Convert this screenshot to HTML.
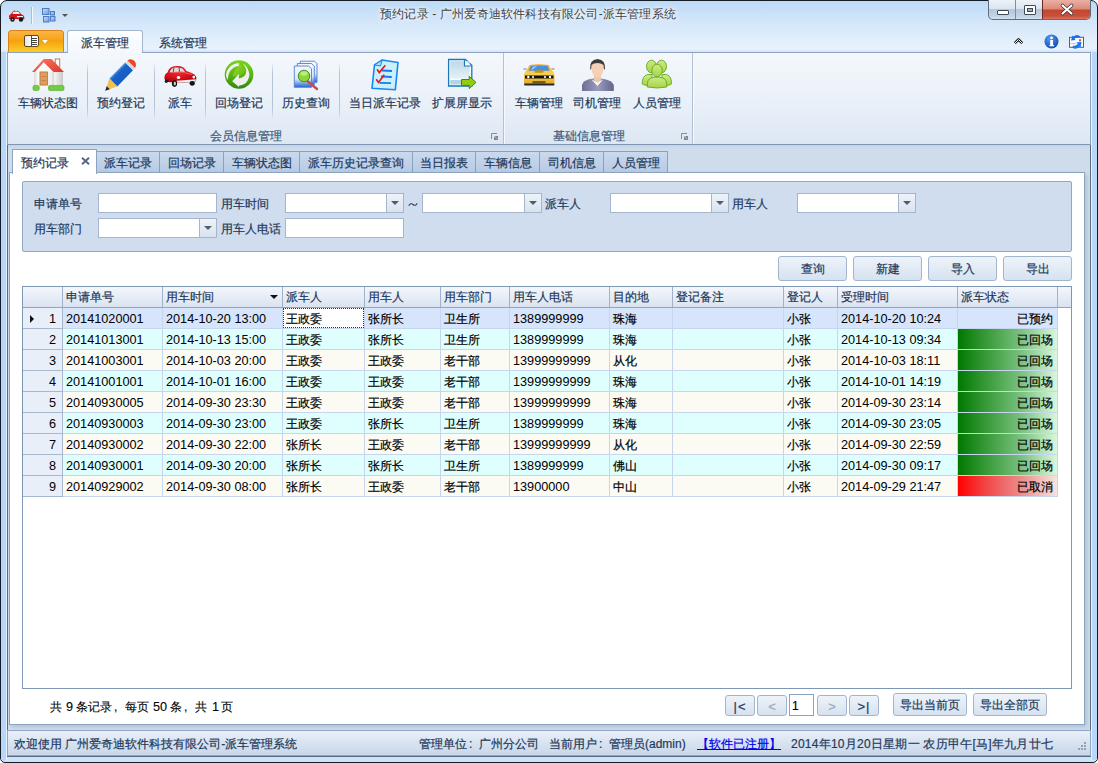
<!DOCTYPE html>
<html><head><meta charset="utf-8">
<style>
*{box-sizing:border-box;margin:0;padding:0}
html,body{width:1098px;height:763px;overflow:hidden;background:#fff}
body{font-family:"Liberation Sans",sans-serif;font-size:12px;color:#1e395b;position:relative;-webkit-text-stroke:0.2px currentColor}
.a{position:absolute}
.t{position:absolute;white-space:nowrap;line-height:14px}
svg{position:absolute;overflow:visible}
.sep{position:absolute;width:1px;top:62px;height:58px;background:linear-gradient(rgba(170,186,206,0),#b5c4d6 20%,#b5c4d6 80%,rgba(170,186,206,0))}
.rb{position:absolute;top:96px;line-height:14px;white-space:nowrap;color:#1e395b}
.dt{position:absolute;top:151px;height:22px;border:1px solid #8aa2c2;border-bottom:none;background:linear-gradient(#cad9ee,#b6cae3);color:#1e395b;line-height:22px;text-align:center}
.lb{position:absolute;line-height:14px;white-space:nowrap;color:#1e395b}
.in{position:absolute;height:20px;background:#fff;border:1px solid #a4b5cc}
.dd{position:absolute;top:0;right:0;width:17px;height:18px;border-left:1px solid #a4b5cc;background:linear-gradient(#eef3f9,#d9e3ef)}
.dd:after{content:"";position:absolute;left:4px;top:7px;border-left:4px solid transparent;border-right:4px solid transparent;border-top:4px solid #4d5d72}
.btn{position:absolute;border:1px solid #a3b5cd;border-radius:3px;background:linear-gradient(#eef3f9,#d6e2f0);color:#1e395b;text-align:center;line-height:24px}
.gh{position:absolute;top:290px;line-height:14px;white-space:nowrap;color:#1e395b}
.gc{position:absolute;line-height:14px;white-space:nowrap;color:#000;font-size:12.7px;margin-top:1px;-webkit-text-stroke:0}
.gz{font-size:12px;margin-top:1px;-webkit-text-stroke:0.2px currentColor}
.rn{position:absolute;left:23px;width:33px;text-align:right;line-height:14px;color:#000;font-size:12.7px;margin-top:1px;-webkit-text-stroke:0}
</style></head><body>
<!-- window frame -->
<div class="a" style="left:0;top:0;width:1098px;height:763px;background:linear-gradient(#bcdaf6 0px,#d1e5f9 18px,#e8f2fc 48px,#c9def5 52px,#cfe3f8 100%);border:1px solid #141c26;border-radius:7px 7px 5px 5px"></div>
<div class="a" style="left:1px;top:52px;width:6px;height:708px;background:linear-gradient(90deg,#b8d6f8 0,#b8d6f8 5px,#e6f2fe 5px)"></div>
<div class="a" style="left:1091px;top:52px;width:6px;height:708px;background:linear-gradient(90deg,#e6f2fe 0,#e6f2fe 1px,#b8d6f8 1px)"></div>

<!-- quick access toolbar -->
<svg style="left:8px;top:10px" width="17" height="12" viewBox="0 0 17 12">
 <path d="M1 6.5 Q1 4.5 3 4 L5 1.5 Q8 .5 11 1.5 L13 4 Q16 4.8 16.3 7 V9 H1.2 Z" fill="#d4121c"/>
 <path d="M5.3 2 Q8 1.2 10.7 2 L11.8 4 H4.5 Z" fill="#eef2f2"/>
 <rect x="5.5" y=".6" width="1.6" height="1.2" fill="#f33"/><rect x="8.8" y=".6" width="1.6" height="1.2" fill="#3b3"/>
 <rect x="9" y="6" width="6" height="1.3" fill="#f4f4f4"/>
 <ellipse cx="4.5" cy="9.5" rx="2.2" ry="2.2" fill="#151515"/><ellipse cx="13" cy="9.5" rx="2.2" ry="2.2" fill="#151515"/>
 <circle cx="4.5" cy="9.5" r=".8" fill="#bbb"/>
</svg>
<div class="a" style="left:31px;top:7px;width:1px;height:17px;background:#a9bdd4;box-shadow:1px 0 0 #f4f9ff"></div>
<svg style="left:42px;top:8px" width="14" height="15" viewBox="0 0 14 15">
 <defs><linearGradient id="qg" x1="0" y1="0" x2="1" y2="1"><stop offset="0" stop-color="#c9dcf4"/><stop offset="1" stop-color="#6f9ad6"/></linearGradient></defs>
 <rect x=".5" y=".5" width="6.5" height="6" fill="url(#qg)" stroke="#4d7cc4"/>
 <rect x="8.5" y="3.5" width="4" height="3.5" fill="url(#qg)" stroke="#4d7cc4"/>
 <rect x="1.5" y="8.5" width="5.5" height="5.5" fill="url(#qg)" stroke="#4d7cc4"/>
 <rect x="8.5" y="8.5" width="4.5" height="4.5" fill="url(#qg)" stroke="#4d7cc4"/>
</svg>
<div class="a" style="left:62px;top:14px;border-left:3px solid transparent;border-right:3px solid transparent;border-top:3px solid #555"></div>

<!-- title -->
<div class="t" style="left:380px;top:7px;color:#404040;-webkit-text-stroke:0;letter-spacing:0.2px;text-shadow:0 0 6px #fff,0 0 3px #fff">预约记录 - 广州爱奇迪软件科技有限公司-派车管理系统</div>

<!-- window buttons -->
<div class="a" style="left:988px;top:0;width:103px;height:20px;border:1px solid #5f6d7e;border-top:none;border-radius:0 0 5px 5px;overflow:hidden;background:linear-gradient(#edf3f9,#dbe5f0 45%,#b7c8dc 50%,#c3d3e6 85%,#d5e2ef)">
 <div class="a" style="left:26px;top:0;width:1px;height:20px;background:#7d8da0"></div>
 <div class="a" style="left:53px;top:0;width:49px;height:20px;border-left:1px solid #6a2a24;background:linear-gradient(#eab0a4,#dc8a78 45%,#c5452e 50%,#c9503a 80%,#d8806a)"></div>
 <div class="a" style="left:8px;top:10px;width:12px;height:5px;background:#fff;border:1px solid #3e4a58;border-radius:1px"></div>
 <div class="a" style="left:35px;top:5px;width:12px;height:10px;background:#fff;border:1px solid #3e4a58;border-radius:1px"></div>
 <div class="a" style="left:38px;top:8px;width:6px;height:4px;background:#9fb0c4;border:1px solid #3e4a58"></div>
 <svg style="left:72px;top:4px" width="12" height="11" viewBox="0 0 12 11"><path d="M1.5 1.5 L10.5 9.5 M10.5 1.5 L1.5 9.5" stroke="#3a2a2a" stroke-width="3.6" stroke-linecap="round"/><path d="M1.5 1.5 L10.5 9.5 M10.5 1.5 L1.5 9.5" stroke="#fff" stroke-width="2.2" stroke-linecap="round"/></svg>
</div>
<div class="a" style="left:1090px;top:52px;width:1px;height:705px;background:#5a6b80"></div>
<div class="a" style="left:7px;top:52px;width:1px;height:705px;background:#5a6b80"></div>
<div class="a" style="left:7px;top:756px;width:1084px;height:1px;background:#5a6b80"></div>

<!-- ribbon tabs -->
<div class="a" style="left:8px;top:30px;width:56px;height:23px;border:1px solid #d9801a;border-bottom:none;border-radius:4px 4px 0 0;background:linear-gradient(#fbb546,#f6a10e 45%,#f9b81a 70%,#fdd030)"></div>
<div class="a" style="left:24px;top:35px;width:15px;height:12px;border:1px solid #5d4a20;border-radius:2px;background:linear-gradient(90deg,#e6e6e6 0,#fafafa 6px,#5d4a20 6px,#5d4a20 7px,#fff 7px)"></div>
<div class="a" style="left:32px;top:38px;width:5px;height:1px;background:#444;box-shadow:0 2px 0 #444,0 4px 0 #444,0 6px 0 #444"></div>
<div class="a" style="left:42px;top:40px;border-left:3.5px solid transparent;border-right:3.5px solid transparent;border-top:4px solid #fff;filter:drop-shadow(0 0 .6px #6a4a10)"></div>

<div class="a" style="left:67px;top:30px;width:76px;height:23px;border:1px solid #a3b6cf;border-bottom:none;border-radius:3px 3px 0 0;background:linear-gradient(#fdfeff,#f3f7fc)"></div>
<div class="t" style="left:81px;top:36px;color:#1e395b">派车管理</div>
<div class="t" style="left:159px;top:36px;color:#1e395b">系统管理</div>

<!-- right ribbon icons -->
<svg style="left:1013px;top:37px" width="11" height="8" viewBox="0 0 11 8"><path d="M1.8 6.2 L5.5 2.5 L9.2 6.2" fill="none" stroke="#1a1a1a" stroke-width="2.6" stroke-linejoin="round"/><path d="M1.8 6.2 L5.5 2.5 L9.2 6.2" fill="none" stroke="#fff" stroke-width="1" stroke-linejoin="round"/></svg>
<svg style="left:1044px;top:34px" width="15" height="15" viewBox="0 0 15 15"><defs><radialGradient id="ig" cx=".4" cy=".3" r=".8"><stop offset="0" stop-color="#4f9ef5"/><stop offset="1" stop-color="#0b44a8"/></radialGradient></defs><circle cx="7.5" cy="7.5" r="7" fill="url(#ig)"/><rect x="6.2" y="6" width="2.8" height="6" fill="#fff"/><rect x="5.5" y="11" width="4.5" height="1.3" fill="#fff"/><circle cx="7.6" cy="3.8" r="1.4" fill="#fff"/></svg>
<svg style="left:1064px;top:30px" width="24" height="24" viewBox="0 0 24 24">
 <rect x="5.5" y="7.3" width="14" height="10" fill="#fafafa" stroke="#5a5a7a" stroke-width="1"/>
 <rect x="15" y="9.3" width="2" height="2" fill="#c05a20"/>
 <path d="M6.5 13.5 H12" stroke="#b8b8b8" stroke-width=".8"/>
 <path d="M16.5 6.5 Q13 3.5 9.5 6.5 L8.5 5.5 L7 10.5 L11.5 10 L10.5 8.5 Q13 6.5 15 7.5 Z" fill="#1a6af0"/>
 <path d="M8 17.5 Q12 20.5 15.5 16.5 L16.5 17.5 L17.5 12 L12.5 12.3 L13.8 13.8 Q11.5 16.5 9.5 15.5 Z" fill="#1a78f0"/>
</svg>

<!-- ribbon body -->
<div class="a" style="left:7px;top:52px;width:1084px;height:93px;border:1px solid #8ea3bf;border-bottom-color:#7f95b3;background:linear-gradient(#f4f8fd,#e9f0f8 55%,#dde7f3)"></div>
<div class="a" style="left:68px;top:52px;width:74px;height:1px;background:#f4f8fd"></div>
<!-- group separators -->
<div class="a" style="left:503px;top:53px;width:1px;height:91px;background:#b2c2d6;box-shadow:1px 0 0 #f6f9fd"></div>
<div class="a" style="left:692px;top:53px;width:1px;height:91px;background:#b2c2d6;box-shadow:1px 0 0 #f6f9fd"></div>
<div class="sep" style="left:87px"></div>
<div class="sep" style="left:154px"></div>
<div class="sep" style="left:205px"></div>
<div class="sep" style="left:272px"></div>
<div class="sep" style="left:339px"></div>

<div class="rb" style="left:18px">车辆状态图</div>
<div class="rb" style="left:97px">预约登记</div>
<div class="rb" style="left:168px">派车</div>
<div class="rb" style="left:215px">回场登记</div>
<div class="rb" style="left:282px">历史查询</div>
<div class="rb" style="left:349px">当日派车记录</div>
<div class="rb" style="left:432px">扩展屏显示</div>
<div class="rb" style="left:515px">车辆管理</div>
<div class="rb" style="left:573px">司机管理</div>
<div class="rb" style="left:633px">人员管理</div>
<div class="rb" style="left:210px;top:129px;color:#3e5a7d">会员信息管理</div>
<div class="rb" style="left:553px;top:129px;color:#3e5a7d">基础信息管理</div>
<svg style="left:491px;top:133px" width="8" height="8" viewBox="0 0 8 8"><path d="M.5 6 V.5 H6" fill="none" stroke="#858d98" stroke-width="1"/><path d="M3 3 L7 7 H3 Z M4 3 H7 V7 Z" fill="#7f8790"/></svg>
<svg style="left:681px;top:133px" width="8" height="8" viewBox="0 0 8 8"><path d="M.5 6 V.5 H6" fill="none" stroke="#858d98" stroke-width="1"/><path d="M3 3 L7 7 H3 Z M4 3 H7 V7 Z" fill="#7f8790"/></svg>

<!-- house -->
<svg style="left:28px;top:55px" width="40" height="40" viewBox="0 0 40 40">
 <defs>
  <linearGradient id="hw" x1="0" x2="1"><stop offset="0" stop-color="#d9d9d9"/><stop offset=".15" stop-color="#fbfbfb"/><stop offset=".62" stop-color="#f0f0f0"/><stop offset=".66" stop-color="#cfcfcf"/><stop offset=".7" stop-color="#f4f4f4"/><stop offset="1" stop-color="#c9c9c9"/></linearGradient>
  <linearGradient id="hr" x1="0" y1="0" x2="1" y2="1"><stop offset="0" stop-color="#ff7a66"/><stop offset="1" stop-color="#d93a2a"/></linearGradient>
 </defs>
 <rect x="6" y="16" width="29" height="19.5" fill="url(#hw)"/>
 <path d="M7 17 L15.7 7.5 L25.5 17 Z" fill="#f9f9f9"/>
 <rect x="27.3" y="4" width="4.4" height="8" fill="#fff" stroke="#d07a3a" stroke-width="1"/>
 <path d="M4 17 L15.7 3.9 L23.5 3.9 L36 17 L25.5 17 L15.7 7.3 L7 17 Z" fill="url(#hr)"/>
 <rect x="12" y="17" width="7.4" height="13" fill="#dba060" stroke="#c27a36" stroke-width="1"/>
 <path d="M13.5 21.5 H18 M13.5 25.5 H18" stroke="#c27a36" stroke-width=".8"/>
 <rect x="11" y="31" width="9.5" height="4" fill="#f6f6f6"/>
 <rect x="5" y="30.4" width="6.2" height="5.2" rx="1.5" fill="#72cc40" stroke="#52a828" stroke-width=".6"/>
 <rect x="20.5" y="30.4" width="15.5" height="5.2" rx="1.5" fill="#72cc40" stroke="#52a828" stroke-width=".6"/>
</svg>
<!-- pencil -->
<svg style="left:100px;top:55px" width="40" height="40" viewBox="0 0 40 40">
 <defs><linearGradient id="pb" x1="0" y1="0" x2="1" y2="1"><stop offset="0" stop-color="#2a78dc"/><stop offset=".3" stop-color="#5aa6f0"/><stop offset=".42" stop-color="#1a60c8"/><stop offset=".7" stop-color="#1a5cc0"/><stop offset="1" stop-color="#083c98"/></linearGradient></defs>
 <path d="M9.4 23.6 L25.2 7.6 L33 15.2 L17.3 31.5 Z" fill="url(#pb)"/>
 <path d="M25.2 7.6 L27.5 5.5 L35.2 13 L33 15.2 Z" fill="#d8d8d8"/>
 <path d="M27.5 5.5 Q31 3 34.5 6 Q37 9 35.2 13 Z" fill="#ee4422"/>
 <path d="M9.4 23.6 L17.3 31.5 L5.2 35.8 Z" fill="#f0c050"/>
 <path d="M5.2 35.8 L6.7 31.2 L9.8 34.3 Z" fill="#1a2a40"/>
</svg>
<!-- beetle car -->
<svg style="left:160px;top:55px" width="40" height="40" viewBox="0 0 40 40">
 <defs><radialGradient id="cr" cx=".45" cy=".35" r=".7"><stop offset="0" stop-color="#f0303a"/><stop offset=".7" stop-color="#cc0a14"/><stop offset="1" stop-color="#8a0008"/></radialGradient></defs>
 <path d="M4.5 24 Q4 19 7.5 17.5 Q9 12 14 11.3 Q20 10.5 23.5 12.5 Q25.5 14 26.5 16 Q31.5 17.5 34.5 19.5 Q36.5 21 36.2 24.5 L35.8 26.5 Q30 27.5 20 27.5 Q10 27.5 6 26.5 Z" fill="url(#cr)"/>
 <path d="M9.5 17.5 Q11 13 14.5 12.5 Q19.5 12 22.5 13.5 L25 17 Q17 16.5 9.5 17.5 Z" fill="#d9dfe3"/>
 <path d="M14 12.8 L13.2 17.2 M19 12.3 L19.5 16.8" stroke="#7a2020" stroke-width=".9"/>
 <path d="M12 17.5 Q22 15.5 32 19.5" stroke="#ff6a6a" stroke-width=".8" fill="none"/>
 <path d="M16.5 25.7 Q26 25 35.8 24.3 L35.6 26.5 Q26 27.3 16.5 27.5 Z" fill="#eeeeee"/>
 <ellipse cx="18.5" cy="22.5" rx="1.8" ry="1.6" fill="#eef4f6"/>
 <ellipse cx="33.8" cy="22" rx="1.4" ry="1.5" fill="#eef4f6"/>
 <ellipse cx="14.5" cy="28.6" rx="2.6" ry="3.3" fill="#141414"/>
 <ellipse cx="14.8" cy="28.6" rx="1.1" ry="2" fill="#d0d0d0"/>
 <ellipse cx="32.2" cy="28.3" rx="2.6" ry="2.4" fill="#141414"/>
 <ellipse cx="6.3" cy="26.3" rx="1.6" ry="1.6" fill="#1a1a1a"/>
</svg>
<!-- recycle -->
<svg style="left:219px;top:55px" width="40" height="40" viewBox="0 0 40 40">
 <defs><linearGradient id="rg" x1="0" y1="0" x2="0" y2="1"><stop offset="0" stop-color="#7cd41c"/><stop offset=".5" stop-color="#5cb414"/><stop offset="1" stop-color="#2e8a0c"/></linearGradient>
 <linearGradient id="rh" x1="0" y1="0" x2="1" y2="1"><stop offset="0" stop-color="#9ee21e"/><stop offset="1" stop-color="#5cb414"/></linearGradient></defs>
 <circle cx="20.05" cy="19.5" r="14.3" fill="url(#rg)"/>
 <path d="M8.3 25.3 Q6.5 21 7.2 18.6 Q8 15 9.7 13.2 Q12 10.2 14.6 9.2 Q17 8 19.9 7.9 L19.9 11 Q17 11.3 15 12.4 Q12.5 14 10.8 16.4 Q9.5 19 9.2 21.7 Z" fill="#f0f0f0"/>
 <path d="M19.9 8.3 L27.3 15.5 L19.9 21.7 Q16 20 13.5 22 Q15 14 19.9 12 Z" fill="url(#rh)"/>
 <path d="M23.9 8.8 Q28 11 29.7 16.4 Q31 19.5 30.2 21.7 Q29 25.5 27 28 Q24 30 19.9 30.8 L19.9 32 L13.2 26.2 L19.9 19 L19.9 23.5 Q21.5 23.3 23 22.6 Q25 21.5 26.2 19.9 Q27.3 17.5 27.3 15.5 Q26.5 11.5 23.9 8.8 Z" fill="#efefef"/>
</svg>
<!-- history docs -->
<svg style="left:286px;top:55px" width="40" height="40" viewBox="0 0 40 40">
 <defs><linearGradient id="dg" x1="0" y1="0" x2="0" y2="1"><stop offset="0" stop-color="#f4f8fc"/><stop offset=".6" stop-color="#dfeaf6"/><stop offset="1" stop-color="#1e66d0"/></linearGradient></defs>
 <path d="M14.3 6.2 H28.5 L31 8.7 V27.3 H14.3 Z" fill="url(#dg)" stroke="#4f7fd6" stroke-width=".9"/>
 <path d="M11.3 8.5 H25.5 L28.3 11.2 V29.8 H11.3 Z" fill="url(#dg)" stroke="#4f7fd6" stroke-width=".9"/>
 <path d="M8.3 11 H22.5 L25.5 13.8 V32.3 H8.3 Z" fill="url(#dg)" stroke="#4f7fd6" stroke-width=".9"/>
 <path d="M21.8 26.5 L31 34" stroke="#c84858" stroke-width="2.4" stroke-linecap="round"/>
 <circle cx="18" cy="21" r="5.8" fill="#8ad838" stroke="#3c8a18" stroke-width=".9"/>
 <ellipse cx="18" cy="18.5" rx="3.5" ry="2.3" fill="#b8ee7a"/>
</svg>
<!-- checklist -->
<svg style="left:365px;top:55px" width="40" height="40" viewBox="0 0 40 40">
 <path d="M9.5 10 L17.2 5 L33 7.5 L30.3 34.8 L7 33.3 Z" fill="#c9f0fc" stroke="#1a86f0" stroke-width="1.6" stroke-linejoin="round"/>
 <path d="M9.5 10 L17.2 5 L15.5 11 Z" fill="#a8dcf4" stroke="#1a86f0" stroke-width="1"/>
 <path d="M17 15.5 L27 16 M16 21.5 L26.8 22 M14.5 27.8 L26 28.2" stroke="#1a7ce8" stroke-width="1.8"/>
 <path d="M12 14.3 L14.3 17.6 L20.3 10.2" fill="none" stroke="#ee1111" stroke-width="1.6"/>
 <path d="M11.2 24.3 L13.5 27.4 L19.3 19.8" fill="none" stroke="#ee1111" stroke-width="1.6"/>
</svg>
<!-- export doc -->
<svg style="left:442px;top:55px" width="40" height="40" viewBox="0 0 40 40">
 <defs><linearGradient id="eg" x1="0" y1="0" x2="0" y2="1"><stop offset="0" stop-color="#bcdae8"/><stop offset="1" stop-color="#e6f1f7"/></linearGradient></defs>
 <path d="M6.6 4.5 H23.4 L29.8 10.3 V31 H6.6 Z" fill="#fff" stroke="#1a78b8" stroke-width="1.3"/>
 <rect x="8.2" y="6.2" width="19.5" height="17.5" fill="url(#eg)"/>
 <rect x="8.2" y="25" width="11" height="4.5" fill="#b3d6e6"/>
 <path d="M22.5 5 V11 H29.3" fill="#fff" stroke="#1a78b8" stroke-width="1.2"/>
 <path d="M19.5 24.5 H27.2 V21.3 L34 27.4 L27.2 33.6 V30.4 H19.5 Z" fill="#94cc10" stroke="#3a8a10" stroke-width="1"/>
</svg>
<!-- taxi -->
<svg style="left:519px;top:55px" width="40" height="40" viewBox="0 0 40 40">
 <defs><linearGradient id="tg" x1="0" y1="0" x2="0" y2="1"><stop offset="0" stop-color="#f0a528"/><stop offset=".45" stop-color="#f6d050"/><stop offset="1" stop-color="#e8a828"/></linearGradient></defs>
 <path d="M10.5 10 Q20 8.5 29.5 10 L33 15.5 Q35.5 17 35.5 21 V29 H5 V21 Q5 17 7.5 15.5 Z" fill="url(#tg)"/>
 <path d="M12 11 Q20 9.8 28.5 11 L30.5 15.8 H9.5 Z" fill="#4a8ee0"/>
 <path d="M14 12 L18 11 L12 15.5 Z" fill="#bfe0fa"/>
 <rect x="15.5" y="15.5" width="9" height="2.2" rx="1" fill="#c89010"/>
 <rect x="6" y="20.5" width="28.5" height="3" fill="#111"/>
 <circle cx="9.3" cy="22" r="1.2" fill="#fff"/><circle cx="14" cy="22" r="1.1" fill="#fff"/><circle cx="26" cy="22" r="1.1" fill="#fff"/><circle cx="31" cy="22" r="1.2" fill="#fff"/>
 <rect x="13.5" y="26" width="13" height="2.5" fill="#6a6020"/>
 <rect x="5" y="28.5" width="30.5" height="2" rx="1" fill="#2a2a2a"/>
 <rect x="4.5" y="13" width="3" height="2" fill="#b8b8b8"/><rect x="32.5" y="13" width="3" height="2" fill="#b8b8b8"/>
</svg>
<!-- driver -->
<svg style="left:577px;top:55px" width="40" height="40" viewBox="0 0 40 40">
 <defs><linearGradient id="bg2" x1="0" x2="1"><stop offset="0" stop-color="#6c6e94"/><stop offset=".5" stop-color="#9a9cbc"/><stop offset="1" stop-color="#62648a"/></linearGradient></defs>
 <path d="M5 36 V30 Q6 25.5 13 24 L20 23 L27 24 Q35 25.5 36.8 30 V36 Z" fill="url(#bg2)"/>
 <path d="M14.5 24.5 L20.5 31 L26 24.5 L20.5 27 Z" fill="#fafafa"/>
 <path d="M17 21 H24 V24.5 L20.5 28 L17 24.5 Z" fill="#f0c6a6"/>
 <path d="M14.3 9 Q14 22 20.5 22.5 Q27 22 26.7 9 Z" fill="#f6d0b4"/>
 <path d="M13.2 15 Q12 4.5 20.5 4 Q29 4.5 28 15 L26.8 13.5 L26.5 10 Q24 7.8 20.5 8.3 Q16.5 7.8 14.5 10 L14.3 13.5 Z" fill="#3e3a36"/>
</svg>
<!-- people -->
<svg style="left:637px;top:55px" width="40" height="40" viewBox="0 0 40 40">
 <defs><linearGradient id="gg" x1="0" y1="0" x2="0" y2="1"><stop offset="0" stop-color="#cdeb86"/><stop offset="1" stop-color="#a6d444"/></linearGradient></defs>
 <g fill="url(#gg)" stroke="#66a81c" stroke-width=".9">
  <ellipse cx="14.5" cy="11.5" rx="5" ry="6.3"/>
  <ellipse cx="24.5" cy="11.5" rx="5" ry="6.3"/>
  <path d="M5.2 29 Q5 21 10.5 19.5 L15 19.5 V30.5 Q7 30.5 5.2 29 Z"/>
  <path d="M34.5 29 Q34.8 21 29.5 19.5 L25 19.5 V30.5 Q33 30.5 34.5 29 Z"/>
  <path d="M10.3 32 Q10 24 14 23 Q17 22 20 22 Q23 22 26 23 Q30 24 29.8 32 Q20 34 10.3 32 Z"/>
  <ellipse cx="20" cy="15.5" rx="5.2" ry="6.3"/>
 </g>
</svg>


<!-- area below ribbon -->
<div class="a" style="left:8px;top:145px;width:1082px;height:586px;background:linear-gradient(#c5d4e6,#cfdcec 4px,#cfdcec)"></div>

<!-- doc tabs -->
<div class="dt" style="left:96px;width:64px">派车记录</div>
<div class="dt" style="left:159px;width:65px">回场记录</div>
<div class="dt" style="left:223px;width:77px">车辆状态图</div>
<div class="dt" style="left:299px;width:114px">派车历史记录查询</div>
<div class="dt" style="left:412px;width:64px">当日报表</div>
<div class="dt" style="left:475px;width:65px">车辆信息</div>
<div class="dt" style="left:539px;width:65px">司机信息</div>
<div class="dt" style="left:603px;width:65px">人员管理</div>

<!-- content panel -->
<div class="a" style="left:9px;top:172px;width:1076px;height:553px;background:#fff;border:1px solid #8ca3c1;box-shadow:2px 2px 4px rgba(70,100,140,.22)"></div>
<!-- active tab -->
<div class="a" style="left:12px;top:149px;width:85px;height:25px;background:#fff;border:1px solid #8ca3c1;border-bottom:none"></div>
<div class="t" style="left:21px;top:156px;color:#1e395b">预约记录</div>
<svg style="left:81px;top:157px" width="9" height="8" viewBox="0 0 9 8"><path d="M1 .8 L8 7.2 M8 .8 L1 7.2" stroke="#56678a" stroke-width="2"/></svg>


<!-- filter panel -->
<div class="a" style="left:22px;top:181px;width:1050px;height:71px;background:#d0ddee;border:1px solid #92a7c3;border-radius:2px"></div>
<div class="lb" style="left:34px;top:197px">申请单号</div>
<div class="in" style="left:98px;top:193px;width:119px"></div>
<div class="lb" style="left:221px;top:197px">用车时间</div>
<div class="in" style="left:285px;top:193px;width:119px"><div class="dd"></div></div>
<svg style="left:408px;top:201px" width="10" height="7" viewBox="0 0 10 7"><path d="M.8 4.8 Q2.5 1.5 5 3.5 Q7.5 5.5 9.2 2.2" fill="none" stroke="#2a3f5c" stroke-width="1.1"/></svg>
<div class="in" style="left:422px;top:193px;width:120px"><div class="dd"></div></div>
<div class="lb" style="left:545px;top:197px">派车人</div>
<div class="in" style="left:610px;top:193px;width:119px"><div class="dd"></div></div>
<div class="lb" style="left:732px;top:197px">用车人</div>
<div class="in" style="left:797px;top:193px;width:119px"><div class="dd"></div></div>
<div class="lb" style="left:34px;top:222px">用车部门</div>
<div class="in" style="left:98px;top:218px;width:119px"><div class="dd"></div></div>
<div class="lb" style="left:221px;top:222px">用车人电话</div>
<div class="in" style="left:285px;top:218px;width:119px"></div>

<!-- action buttons -->
<div class="btn" style="left:778px;top:256px;width:69px;height:25px">查询</div>
<div class="btn" style="left:853px;top:256px;width:69px;height:25px">新建</div>
<div class="btn" style="left:928px;top:256px;width:69px;height:25px">导入</div>
<div class="btn" style="left:1003px;top:256px;width:69px;height:25px">导出</div>


<!-- grid start -->
<div class="a" style="left:22px;top:286px;width:1050px;height:403px;background:#fff;border:1px solid #7f97b6"></div>
<div class="a" style="left:23px;top:287px;width:1048px;height:20px;background:linear-gradient(#f4f7fc,#e4ebf5 60%,#dae3ef)"></div>
<div class="a" style="left:23px;top:307px;width:1048px;height:1px;background:#8da4c3"></div>
<div class="a" style="left:62px;top:287px;width:1px;height:20px;background:#9fb2cc"></div>
<div class="a" style="left:162px;top:287px;width:1px;height:20px;background:#9fb2cc"></div>
<div class="a" style="left:282px;top:287px;width:1px;height:20px;background:#9fb2cc"></div>
<div class="a" style="left:364px;top:287px;width:1px;height:20px;background:#9fb2cc"></div>
<div class="a" style="left:440px;top:287px;width:1px;height:20px;background:#9fb2cc"></div>
<div class="a" style="left:509px;top:287px;width:1px;height:20px;background:#9fb2cc"></div>
<div class="a" style="left:609px;top:287px;width:1px;height:20px;background:#9fb2cc"></div>
<div class="a" style="left:672px;top:287px;width:1px;height:20px;background:#9fb2cc"></div>
<div class="a" style="left:783px;top:287px;width:1px;height:20px;background:#9fb2cc"></div>
<div class="a" style="left:837px;top:287px;width:1px;height:20px;background:#9fb2cc"></div>
<div class="a" style="left:957px;top:287px;width:1px;height:20px;background:#9fb2cc"></div>
<div class="a" style="left:1057px;top:287px;width:1px;height:20px;background:#9fb2cc"></div>
<div class="gh" style="left:66px">申请单号</div>
<div class="gh" style="left:166px">用车时间</div>
<div class="gh" style="left:286px">派车人</div>
<div class="gh" style="left:368px">用车人</div>
<div class="gh" style="left:444px">用车部门</div>
<div class="gh" style="left:513px">用车人电话</div>
<div class="gh" style="left:613px">目的地</div>
<div class="gh" style="left:676px">登记备注</div>
<div class="gh" style="left:787px">登记人</div>
<div class="gh" style="left:841px">受理时间</div>
<div class="gh" style="left:961px">派车状态</div>
<div class="a" style="left:270px;top:295px;border-left:4px solid transparent;border-right:4px solid transparent;border-top:4px solid #111"></div>
<div class="a" style="left:23px;top:308px;width:39px;height:20px;background:#e9eff8"></div>
<div class="a" style="left:23px;top:328px;width:39px;height:1px;background:#a6b8d0"></div>
<div class="rn" style="top:311px">1</div>
<div class="a" style="left:63px;top:308px;width:994px;height:20px;background:#d6e5fb"></div>
<div class="a" style="left:63px;top:328px;width:994px;height:1px;background:#c5d6ee"></div>
<div class="gc" style="left:66px;top:311px">20141020001</div>
<div class="gc" style="left:166px;top:311px">2014-10-20 13:00</div>
<div class="gc gz" style="left:286px;top:311px">王政委</div>
<div class="gc gz" style="left:368px;top:311px">张所长</div>
<div class="gc gz" style="left:444px;top:311px">卫生所</div>
<div class="gc" style="left:513px;top:311px">1389999999</div>
<div class="gc gz" style="left:613px;top:311px">珠海</div>
<div class="gc gz" style="left:787px;top:311px">小张</div>
<div class="gc" style="left:841px;top:311px">2014-10-20 10:24</div>
<div class="gc gz" style="left:957px;top:311px;width:96px;text-align:right">已预约</div>
<div class="a" style="left:30px;top:315px;border-top:4px solid transparent;border-bottom:4px solid transparent;border-left:4px solid #111"></div>
<div class="a" style="left:283px;top:308px;width:81px;height:20px;background:#fff;border:1px dotted #333"></div>
<div class="gc gz" style="left:286px;top:311px">王政委</div>
<div class="a" style="left:23px;top:329px;width:39px;height:20px;background:#e9eff8"></div>
<div class="a" style="left:23px;top:349px;width:39px;height:1px;background:#a6b8d0"></div>
<div class="rn" style="top:332px">2</div>
<div class="a" style="left:63px;top:329px;width:994px;height:20px;background:#dfffff"></div>
<div class="a" style="left:63px;top:349px;width:994px;height:1px;background:#c5d6ee"></div>
<div class="gc" style="left:66px;top:332px">20141013001</div>
<div class="gc" style="left:166px;top:332px">2014-10-13 15:00</div>
<div class="gc gz" style="left:286px;top:332px">王政委</div>
<div class="gc gz" style="left:368px;top:332px">张所长</div>
<div class="gc gz" style="left:444px;top:332px">卫生所</div>
<div class="gc" style="left:513px;top:332px">1389999999</div>
<div class="gc gz" style="left:613px;top:332px">珠海</div>
<div class="gc gz" style="left:787px;top:332px">小张</div>
<div class="gc" style="left:841px;top:332px">2014-10-13 09:34</div>
<div class="a" style="left:958px;top:329px;width:99px;height:20px;background:linear-gradient(90deg,#007800,#3b9c3b 30%,#7cc283 65%,#d9f7dc)"></div>
<div class="gc gz" style="left:957px;top:332px;width:96px;text-align:right">已回场</div>
<div class="a" style="left:23px;top:350px;width:39px;height:20px;background:#e9eff8"></div>
<div class="a" style="left:23px;top:370px;width:39px;height:1px;background:#a6b8d0"></div>
<div class="rn" style="top:353px">3</div>
<div class="a" style="left:63px;top:350px;width:994px;height:20px;background:#fbfaf3"></div>
<div class="a" style="left:63px;top:370px;width:994px;height:1px;background:#c5d6ee"></div>
<div class="gc" style="left:66px;top:353px">20141003001</div>
<div class="gc" style="left:166px;top:353px">2014-10-03 20:00</div>
<div class="gc gz" style="left:286px;top:353px">王政委</div>
<div class="gc gz" style="left:368px;top:353px">王政委</div>
<div class="gc gz" style="left:444px;top:353px">老干部</div>
<div class="gc" style="left:513px;top:353px">13999999999</div>
<div class="gc gz" style="left:613px;top:353px">从化</div>
<div class="gc gz" style="left:787px;top:353px">小张</div>
<div class="gc" style="left:841px;top:353px">2014-10-03 18:11</div>
<div class="a" style="left:958px;top:350px;width:99px;height:20px;background:linear-gradient(90deg,#007800,#3b9c3b 30%,#7cc283 65%,#d9f7dc)"></div>
<div class="gc gz" style="left:957px;top:353px;width:96px;text-align:right">已回场</div>
<div class="a" style="left:23px;top:371px;width:39px;height:20px;background:#e9eff8"></div>
<div class="a" style="left:23px;top:391px;width:39px;height:1px;background:#a6b8d0"></div>
<div class="rn" style="top:374px">4</div>
<div class="a" style="left:63px;top:371px;width:994px;height:20px;background:#dfffff"></div>
<div class="a" style="left:63px;top:391px;width:994px;height:1px;background:#c5d6ee"></div>
<div class="gc" style="left:66px;top:374px">20141001001</div>
<div class="gc" style="left:166px;top:374px">2014-10-01 16:00</div>
<div class="gc gz" style="left:286px;top:374px">王政委</div>
<div class="gc gz" style="left:368px;top:374px">王政委</div>
<div class="gc gz" style="left:444px;top:374px">老干部</div>
<div class="gc" style="left:513px;top:374px">13999999999</div>
<div class="gc gz" style="left:613px;top:374px">珠海</div>
<div class="gc gz" style="left:787px;top:374px">小张</div>
<div class="gc" style="left:841px;top:374px">2014-10-01 14:19</div>
<div class="a" style="left:958px;top:371px;width:99px;height:20px;background:linear-gradient(90deg,#007800,#3b9c3b 30%,#7cc283 65%,#d9f7dc)"></div>
<div class="gc gz" style="left:957px;top:374px;width:96px;text-align:right">已回场</div>
<div class="a" style="left:23px;top:392px;width:39px;height:20px;background:#e9eff8"></div>
<div class="a" style="left:23px;top:412px;width:39px;height:1px;background:#a6b8d0"></div>
<div class="rn" style="top:395px">5</div>
<div class="a" style="left:63px;top:392px;width:994px;height:20px;background:#fbfaf3"></div>
<div class="a" style="left:63px;top:412px;width:994px;height:1px;background:#c5d6ee"></div>
<div class="gc" style="left:66px;top:395px">20140930005</div>
<div class="gc" style="left:166px;top:395px">2014-09-30 23:30</div>
<div class="gc gz" style="left:286px;top:395px">王政委</div>
<div class="gc gz" style="left:368px;top:395px">王政委</div>
<div class="gc gz" style="left:444px;top:395px">老干部</div>
<div class="gc" style="left:513px;top:395px">13999999999</div>
<div class="gc gz" style="left:613px;top:395px">珠海</div>
<div class="gc gz" style="left:787px;top:395px">小张</div>
<div class="gc" style="left:841px;top:395px">2014-09-30 23:14</div>
<div class="a" style="left:958px;top:392px;width:99px;height:20px;background:linear-gradient(90deg,#007800,#3b9c3b 30%,#7cc283 65%,#d9f7dc)"></div>
<div class="gc gz" style="left:957px;top:395px;width:96px;text-align:right">已回场</div>
<div class="a" style="left:23px;top:413px;width:39px;height:20px;background:#e9eff8"></div>
<div class="a" style="left:23px;top:433px;width:39px;height:1px;background:#a6b8d0"></div>
<div class="rn" style="top:416px">6</div>
<div class="a" style="left:63px;top:413px;width:994px;height:20px;background:#dfffff"></div>
<div class="a" style="left:63px;top:433px;width:994px;height:1px;background:#c5d6ee"></div>
<div class="gc" style="left:66px;top:416px">20140930003</div>
<div class="gc" style="left:166px;top:416px">2014-09-30 23:00</div>
<div class="gc gz" style="left:286px;top:416px">王政委</div>
<div class="gc gz" style="left:368px;top:416px">张所长</div>
<div class="gc gz" style="left:444px;top:416px">卫生所</div>
<div class="gc" style="left:513px;top:416px">1389999999</div>
<div class="gc gz" style="left:613px;top:416px">珠海</div>
<div class="gc gz" style="left:787px;top:416px">小张</div>
<div class="gc" style="left:841px;top:416px">2014-09-30 23:05</div>
<div class="a" style="left:958px;top:413px;width:99px;height:20px;background:linear-gradient(90deg,#007800,#3b9c3b 30%,#7cc283 65%,#d9f7dc)"></div>
<div class="gc gz" style="left:957px;top:416px;width:96px;text-align:right">已回场</div>
<div class="a" style="left:23px;top:434px;width:39px;height:20px;background:#e9eff8"></div>
<div class="a" style="left:23px;top:454px;width:39px;height:1px;background:#a6b8d0"></div>
<div class="rn" style="top:437px">7</div>
<div class="a" style="left:63px;top:434px;width:994px;height:20px;background:#fbfaf3"></div>
<div class="a" style="left:63px;top:454px;width:994px;height:1px;background:#c5d6ee"></div>
<div class="gc" style="left:66px;top:437px">20140930002</div>
<div class="gc" style="left:166px;top:437px">2014-09-30 22:00</div>
<div class="gc gz" style="left:286px;top:437px">张所长</div>
<div class="gc gz" style="left:368px;top:437px">王政委</div>
<div class="gc gz" style="left:444px;top:437px">老干部</div>
<div class="gc" style="left:513px;top:437px">13999999999</div>
<div class="gc gz" style="left:613px;top:437px">从化</div>
<div class="gc gz" style="left:787px;top:437px">小张</div>
<div class="gc" style="left:841px;top:437px">2014-09-30 22:59</div>
<div class="a" style="left:958px;top:434px;width:99px;height:20px;background:linear-gradient(90deg,#007800,#3b9c3b 30%,#7cc283 65%,#d9f7dc)"></div>
<div class="gc gz" style="left:957px;top:437px;width:96px;text-align:right">已回场</div>
<div class="a" style="left:23px;top:455px;width:39px;height:20px;background:#e9eff8"></div>
<div class="a" style="left:23px;top:475px;width:39px;height:1px;background:#a6b8d0"></div>
<div class="rn" style="top:458px">8</div>
<div class="a" style="left:63px;top:455px;width:994px;height:20px;background:#dfffff"></div>
<div class="a" style="left:63px;top:475px;width:994px;height:1px;background:#c5d6ee"></div>
<div class="gc" style="left:66px;top:458px">20140930001</div>
<div class="gc" style="left:166px;top:458px">2014-09-30 20:00</div>
<div class="gc gz" style="left:286px;top:458px">张所长</div>
<div class="gc gz" style="left:368px;top:458px">张所长</div>
<div class="gc gz" style="left:444px;top:458px">卫生所</div>
<div class="gc" style="left:513px;top:458px">1389999999</div>
<div class="gc gz" style="left:613px;top:458px">佛山</div>
<div class="gc gz" style="left:787px;top:458px">小张</div>
<div class="gc" style="left:841px;top:458px">2014-09-30 09:17</div>
<div class="a" style="left:958px;top:455px;width:99px;height:20px;background:linear-gradient(90deg,#007800,#3b9c3b 30%,#7cc283 65%,#d9f7dc)"></div>
<div class="gc gz" style="left:957px;top:458px;width:96px;text-align:right">已回场</div>
<div class="a" style="left:23px;top:476px;width:39px;height:20px;background:#e9eff8"></div>
<div class="a" style="left:23px;top:496px;width:39px;height:1px;background:#a6b8d0"></div>
<div class="rn" style="top:479px">9</div>
<div class="a" style="left:63px;top:476px;width:994px;height:20px;background:#fbfaf3"></div>
<div class="a" style="left:63px;top:496px;width:994px;height:1px;background:#c5d6ee"></div>
<div class="gc" style="left:66px;top:479px">20140929002</div>
<div class="gc" style="left:166px;top:479px">2014-09-30 08:00</div>
<div class="gc gz" style="left:286px;top:479px">张所长</div>
<div class="gc gz" style="left:368px;top:479px">王政委</div>
<div class="gc gz" style="left:444px;top:479px">老干部</div>
<div class="gc" style="left:513px;top:479px">13900000</div>
<div class="gc gz" style="left:613px;top:479px">中山</div>
<div class="gc gz" style="left:787px;top:479px">小张</div>
<div class="gc" style="left:841px;top:479px">2014-09-29 21:47</div>
<div class="a" style="left:958px;top:476px;width:99px;height:20px;background:linear-gradient(90deg,#ff0000,#f24a4a 30%,#eb8f8f 65%,#f6e4e0)"></div>
<div class="gc gz" style="left:957px;top:479px;width:96px;text-align:right">已取消</div>
<div class="a" style="left:62px;top:308px;width:1px;height:189px;background:#a6b8d0"></div>
<div class="a" style="left:162px;top:308px;width:1px;height:189px;background:#c5d6ee"></div>
<div class="a" style="left:282px;top:308px;width:1px;height:189px;background:#c5d6ee"></div>
<div class="a" style="left:364px;top:308px;width:1px;height:189px;background:#c5d6ee"></div>
<div class="a" style="left:440px;top:308px;width:1px;height:189px;background:#c5d6ee"></div>
<div class="a" style="left:509px;top:308px;width:1px;height:189px;background:#c5d6ee"></div>
<div class="a" style="left:609px;top:308px;width:1px;height:189px;background:#c5d6ee"></div>
<div class="a" style="left:672px;top:308px;width:1px;height:189px;background:#c5d6ee"></div>
<div class="a" style="left:783px;top:308px;width:1px;height:189px;background:#c5d6ee"></div>
<div class="a" style="left:837px;top:308px;width:1px;height:189px;background:#c5d6ee"></div>
<div class="a" style="left:957px;top:308px;width:1px;height:189px;background:#c5d6ee"></div>
<div class="a" style="left:1057px;top:308px;width:1px;height:189px;background:#c5d6ee"></div>
<!-- grid end -->

<!-- footer -->
<div class="t" style="left:50px;top:700px;color:#000;-webkit-text-stroke:0.1px #000">共</div>
<div class="t" style="left:66px;top:700px;color:#000;-webkit-text-stroke:0.1px #000;font-size:12.7px">9</div>
<div class="t" style="left:76px;top:700px;color:#000;-webkit-text-stroke:0.1px #000">条记录</div>
<div class="t" style="left:114px;top:700px;color:#000;-webkit-text-stroke:0.1px #000">,</div>
<div class="t" style="left:125px;top:700px;color:#000;-webkit-text-stroke:0.1px #000">每页</div>
<div class="t" style="left:153px;top:700px;color:#000;-webkit-text-stroke:0.1px #000;font-size:12.7px">50</div>
<div class="t" style="left:170px;top:700px;color:#000;-webkit-text-stroke:0.1px #000">条</div>
<div class="t" style="left:184px;top:700px;color:#000;-webkit-text-stroke:0.1px #000">,</div>
<div class="t" style="left:195px;top:700px;color:#000;-webkit-text-stroke:0.1px #000">共</div>
<div class="t" style="left:212px;top:700px;color:#000;-webkit-text-stroke:0.1px #000;font-size:12.7px">1</div>
<div class="t" style="left:221px;top:700px;color:#000;-webkit-text-stroke:0.1px #000">页</div>
<div class="btn" style="left:725px;top:695px;width:30px;height:21px;line-height:21px;color:#1e395b;font-size:13px;letter-spacing:1px">|&lt;</div>
<div class="btn" style="left:757px;top:695px;width:30px;height:21px;line-height:21px;color:#9aa9bb;font-size:13px">&lt;</div>
<div class="a" style="left:789px;top:694px;width:25px;height:22px;background:#fff;border:1px solid #8ea3bf"></div>
<div class="t" style="left:792px;top:699px;color:#000">1</div>
<div class="btn" style="left:817px;top:695px;width:30px;height:21px;line-height:21px;color:#9aa9bb;font-size:13px">&gt;</div>
<div class="btn" style="left:849px;top:695px;width:30px;height:21px;line-height:21px;color:#1e395b;font-size:13px;letter-spacing:1px">&gt;|</div>
<div class="btn" style="left:893px;top:693px;width:74px;height:23px;line-height:23px">导出当前页</div>
<div class="btn" style="left:973px;top:693px;width:74px;height:23px;line-height:23px">导出全部页</div>


<!-- status bar -->
<div class="a" style="left:7px;top:730px;width:1084px;height:26px;border:1px solid #91a6c2;background:linear-gradient(#e9f0f8,#d8e3f0 50%,#c9d7e9)"></div>
<div class="t" style="left:14px;top:737px;color:#1e395b">欢迎使用 广州爱奇迪软件科技有限公司-派车管理系统</div>
<div class="t" style="left:419px;top:737px;color:#1e395b">管理单位<span style="display:inline-block;width:12px;padding-left:2px">:</span>广州分公司</div>
<div class="t" style="left:549px;top:737px;color:#1e395b">当前用户<span style="display:inline-block;width:12px;padding-left:2px">:</span>管理员(admin)</div>
<div class="t" style="left:697px;top:737px;color:#0000ee;text-decoration:underline">【软件已注册】</div>
<div class="t" style="left:791px;top:737px;color:#1e395b;letter-spacing:0.25px">2014年10月20日星期一 农历甲午[马]年九月廿七</div>
<svg style="left:1076px;top:742px" width="11" height="11" viewBox="0 0 11 11"><g fill="#8fa3bd"><rect x="8" y="0" width="2" height="2"/><rect x="5" y="3" width="2" height="2"/><rect x="8" y="3" width="2" height="2"/><rect x="2" y="6" width="2" height="2"/><rect x="5" y="6" width="2" height="2"/><rect x="8" y="6" width="2" height="2"/></g></svg>
</body></html>
